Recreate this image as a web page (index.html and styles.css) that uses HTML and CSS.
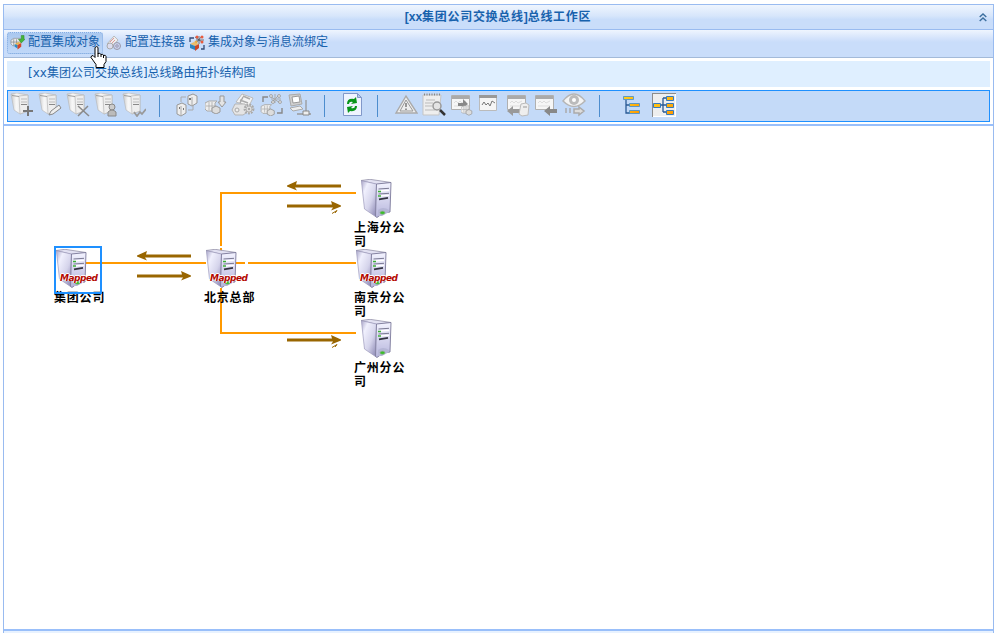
FILE: index.html
```html
<!DOCTYPE html>
<html lang="zh-CN">
<head>
<meta charset="utf-8">
<title>总线工作区</title>
<link rel="stylesheet" href="styles.css">
</head>
<body>
<svg class="defs" width="0" height="0">
  <defs>
    <linearGradient id="side" x1="0" y1="0" x2="1" y2="1"><stop offset="0" stop-color="#aaa6c9"/><stop offset=".25" stop-color="#f0f0fd"/><stop offset=".6" stop-color="#d5d4eb"/><stop offset="1" stop-color="#8581af"/></linearGradient>
    <linearGradient id="face" x1="0" y1="0" x2="0" y2="1"><stop offset="0" stop-color="#f3f3ff"/><stop offset="1" stop-color="#b6b5dc"/></linearGradient>
    <linearGradient id="gside" x1="0" y1="0" x2="1" y2="0"><stop offset="0" stop-color="#c8c8c8"/><stop offset=".3" stop-color="#f8f8f8"/><stop offset="1" stop-color="#d8d8d8"/></linearGradient>
    <linearGradient id="gold" x1="0" y1="0" x2="1" y2="1"><stop offset="0" stop-color="#ffd21c"/><stop offset="1" stop-color="#ff9800"/></linearGradient>
    <symbol id="server" viewBox="0 0 32 40">
      <path d="M0 1.500L9 .3 30 3.500 16 5.500z" fill="#e2e1f2" stroke="#89879f" stroke-width=".7"/>
      <path d="M.4 1.700L15.500 5l-1 32.500L3.500 30z" fill="url(#side)" stroke="#9c99bb" stroke-width=".7"/>
      <path d="M15.500 5L30 3.500 29 33l-7 1-6 4.500-1.500-1z" fill="url(#face)" stroke="#7d7b9b" stroke-width=".9"/>
      <path d="M17 31q5-4 11 0v2l-7 4h-4z" fill="#b5b6d6"/>
      <path d="M17.500 10l10.500-.7M17.500 15l10.500-.7" stroke="#7b7a94" stroke-width="1" fill="none"/>
      <path d="M17.500 12l10.500-.7M17.500 17l10.500-.7" stroke="#fff" stroke-width="1.300"/>
      <path d="M18 20.400l9-1.500" stroke="#333443" stroke-width="1.700"/>
      <path d="M17 12.500h3M17 17h3" stroke="#3cad37" stroke-width="1.500"/>
      <ellipse cx="21.500" cy="33.700" rx="2.400" ry="1.500" fill="#37bf26" stroke="#83a883" stroke-width=".6"/>
    </symbol>
    <symbol id="gserver" viewBox="0 0 24 24">
      <path d="M1 1l6-1 11 2v16l-8 3-6-4z" fill="url(#gside)" stroke="#b5b5b5" stroke-width=".6"/>
      <path d="M9 3l9-1v16l-8 3z" fill="#eee" stroke="#b9b9b9" stroke-width=".7"/>
      <path d="M2 2.500l7 1" stroke="#9d9d9d"/>
      <path d="M11 6h6M11 9h6" stroke="#bcbcbc"/><path d="M11 11.500h6" stroke="#888"/>
    </symbol>
    <symbol id="cubes" viewBox="0 0 18 16">
      <path d="M0 5l4-2h8l-2 2v8H2l-2-2z" fill="#eee" stroke="#aaa"/><path d="M1 8h10M4 4v8M7 4v8" stroke="#aaa" stroke-width=".8"/>
      <path d="M7 10l4-2 4 2v4l-4 2-4-2z" fill="#ddd" stroke="#999"/>
    </symbol>
    <symbol id="gear" viewBox="0 0 12 12">
      <circle cx="6" cy="6" r="4.200" fill="#eee" stroke="#aaa" stroke-width="2.400" stroke-dasharray="1.800 1"/><circle cx="6" cy="6" r="3" fill="#ddd" stroke="#aaa" stroke-width=".8"/><circle cx="6" cy="6" r="1" fill="#999"/>
    </symbol>
    <symbol id="windowpane" viewBox="0 0 20 18">
      <path d="M.5.5h18v14H.5z" fill="#f6f6f6" stroke="#b0b0b0"/><path d="M1 1h17v3H1z" fill="#aaa"/><path d="M3 8l2-2 2 2 2-2 2 2 4-2M3 11h12" fill="none" stroke="#ddd"/>
    </symbol>
    <symbol id="arrow" viewBox="0 0 54 10">
      <path d="M0 3.500h45L44 0l10 4.500v1L44 9.500 46 6.500H0z" fill="#960"/>
    </symbol>
  </defs>
</svg>

<main class="panel">
  <header class="panel-title">
    <h1>[xx<span>集团公司交换总线</span>]<span>总线工作区</span></h1>
    <svg class="collapse" width="8" height="9" viewBox="0 0 8 9"><path d="M.7 4L4 1l3.300 3M.7 8L4 5l3.300 3" fill="none" stroke="#3c6f9f" stroke-width="1.400"/></svg>
  </header>

  <nav class="menu">
    <button class="menu-item active">
      <svg width="16" height="16" viewBox="0 0 16 16"><path d="M1 5l3-2h7v8H3L1 9z" fill="#e7eaee" stroke="#8d939b" stroke-width=".8"/><path d="M1 7h9M4 4v7M7 4v7" stroke="#888" stroke-width=".8"/><path d="M9 4h3V0h3v4h1l-4 4z" fill="#45b738" stroke="#278021" stroke-width=".5"/><path d="M5 9l3 1v4l-3-2z" fill="#298ecb"/><path d="M8 10l4-2v4l-4 3z" fill="#d3482b"/><path d="M5 9l4-2 3 1-4 2z" fill="#e7b24f"/></svg>
      <span>配置集成对象</span>
    </button>
    <button class="menu-item">
      <svg width="16" height="16" viewBox="0 0 16 16"><path d="M1 9L8 1l4 4-6 7z" fill="#eee" stroke="#bbb"/><path d="M4 7l4-4M5 9l4-4" stroke="#d99"/><circle cx="4" cy="11" r="3" fill="#dde" stroke="#aaa"/><circle cx="11" cy="11" r="3.500" fill="#ccd3ed" stroke="#99a"/><circle cx="11" cy="11" r="1.200" fill="#fff" stroke="#88a"/></svg>
      <span>配置连接器</span>
    </button>
    <button class="menu-item">
      <svg width="16" height="16" viewBox="0 0 16 16"><path d="M1 7V3h4M12 14h3v-4" fill="none" stroke="#334b77" stroke-width="1.300"/><path d="M6 2l7 5M13 1L7 8M7 5h8M10 1v8" stroke="#555" stroke-width=".8"/><g fill="#e95a3c"><circle cx="8" cy="2" r="1.500"/><circle cx="13" cy="2" r="1.500"/><circle cx="13" cy="7" r="1.500"/></g><circle cx="7" cy="7" r="1.500" fill="#e8ac47"/><path d="M1 9l4-2 5 2-4 2z" fill="#ecbc69"/><path d="M1 9l5 2v4l-5-2z" fill="#2e84be"/><path d="M6 11l4-2v4l-4 3z" fill="#c94729"/></svg>
      <span>集成对象与消息流绑定</span>
    </button>
  </nav>

  <section class="workspace-head">
    <h2>[xx集团公司交换总线]总线路由拓扑结构图</h2>
    <div class="tools">
      <div class="group">
        <svg class="tool" viewBox="0 0 24 24"><use href="#gserver" width="24" height="24"/><path d="M18 13v10M13 18h10" stroke="#777" stroke-width="2"/></svg>
        <svg class="tool" viewBox="0 0 24 24"><use href="#gserver" width="24" height="24"/><path d="M11 22l2-4 8-6 2 3-8 6z" fill="#eee" stroke="#888"/></svg>
        <svg class="tool" viewBox="0 0 24 24"><use href="#gserver" width="24" height="24"/><path d="M12 13l11 10M22 13L12 23" stroke="#8a8a8a" stroke-width="1.500"/></svg>
        <svg class="tool" viewBox="0 0 24 24"><use href="#gserver" width="24" height="24"/><circle cx="18" cy="14" r="3" fill="#ccc" stroke="#888"/><path d="M14 23v-4q4-4 8 0v4z" fill="#bbb" stroke="#888"/></svg>
        <svg class="tool" viewBox="0 0 24 24"><use href="#gserver" width="24" height="24"/><path d="M12 19l3 4 3-4 2 2 4-5" fill="none" stroke="#999" stroke-width="1.800"/></svg>
      </div>
      <i class="divider"></i>
      <div class="group">
        <svg class="tool" viewBox="0 0 24 24"><path d="M6 9V4h5M13 17h5v-5" fill="none" stroke="#aaa"/><path d="M13 3l5-2 4 2v7l-5 3-4-2z" fill="#eee" stroke="#999"/><path d="M17 4v8" stroke="#aaa"/><path d="M2 12l5-2 4 2v8l-5 3-4-2z" fill="#eee" stroke="#999"/><path d="M6 13v9" stroke="#aaa"/><path d="M14 6h2M4 15h1M8 16h1" stroke="#777" stroke-width="2"/></svg>
        <svg class="tool" viewBox="0 0 24 24"><use href="#cubes" x="2" y="5" width="18" height="16"/><path d="M17 3h4v6h2l-4 5-4-5h2z" fill="#e4e4e4" stroke="#999"/></svg>
        <svg class="tool tall" viewBox="0 0 24 24"><path d="M5 9l6-8 11 4-4 8z" fill="#f4f4f4" stroke="#bbb"/><path d="M9 7l8 3M12 3l7 3M12 4l-3 6" stroke="#aaa" stroke-width="1.500"/><path d="M1 17l3-6h10l4 7-6 4H4z" fill="#e4e4e4" stroke="#b5b5b5"/><circle cx="6" cy="17" r="2" fill="#eee" stroke="#aaa"/><use href="#gear" x="12" y="10" width="12" height="12"/></svg>
        <svg class="tool" viewBox="0 0 24 24"><path d="M4 9V4h5M18 20h5v-5" fill="none" stroke="#888" stroke-width="1.400"/><use href="#cubes" x="1" y="9" width="18" height="14"/><path d="M11 3l10 7M20 2l-8 8M12 6h10M16 1v9" stroke="#aaa"/><g fill="#ddd" stroke="#888" stroke-width=".6"><circle cx="12" cy="3" r="1.500"/><circle cx="20" cy="3" r="1.500"/><circle cx="14" cy="9" r="1.500"/><circle cx="21" cy="9" r="1.500"/></g></svg>
        <svg class="tool" viewBox="0 0 24 24"><path d="M2 2l11-1 2 10-11 2z" fill="#d0d0d0" stroke="#aaa"/><path d="M5 4l7-1 1 6-7 1z" fill="#fff" stroke="#999"/><path d="M3 15l10-2 3 3-10 2z" fill="#eee" stroke="#aaa"/><path d="M19 7v11M10 21h14" fill="none" stroke="#999" stroke-width="1.300"/><path d="M16 18h6v4h-6z" fill="#eee" stroke="#888"/></svg>
      </div>
      <i class="divider"></i>
      <div class="group">
        <svg class="tool" viewBox="0 0 24 24"><path d="M3.500.5h14l4 4v18h-18z" fill="#eff4ff" stroke="#8198c9"/><path d="M17.500.5v4h4z" fill="#b8c9ed" stroke="#8198c9"/><path d="M7 11q0-6 7-5l2-2 1 6-6 1 2-2q-4-1-4 2zM17 13q0 6-7 5l-2 2-1-6 6-1-2 2q4 1 4-2z" fill="#079519"/></svg>
      </div>
      <i class="divider"></i>
      <div class="group monitor">
        <svg class="tool" viewBox="0 0 24 24"><path d="M12 3L2 20h21z" fill="#eee" stroke="#aaa" stroke-width="1.400"/><path d="M12 7l-6 11h13z" fill="#eee" stroke="#999"/><path d="M12 10v4M12 15.500v1.500" stroke="#888" stroke-width="1.700"/></svg>
        <svg class="tool" viewBox="0 0 24 24"><path d="M1 2h18l-2 20H1z" fill="#eee" stroke="#c5c5c5"/><path d="M2 1.500h17" stroke="#888" stroke-width="2" stroke-dasharray="1 1.500"/><path d="M4 7h9M3 10h8M3 13h7M3 17h10" stroke="#bbb"/><circle cx="15" cy="13" r="4" fill="#e4e4e4" stroke="#999" stroke-width="1.500"/><path d="M18 17l5 5" stroke="#333" stroke-width="2.500"/></svg>
        <svg class="tool" viewBox="0 0 24 24"><use href="#windowpane" x="1" y="2" width="20" height="18"/><path d="M8 10h5V6l5 5-5 4v-2H8z" fill="#888"/><use href="#cubes" x="11" y="10" width="13" height="13"/></svg>
        <svg class="tool" viewBox="0 0 24 24"><path d="M1.500 2.500h17v15h-17z" fill="#f5f5f5" stroke="#bbb"/><path d="M1 2h18v3H1z" fill="#999"/><path d="M4 12l2-3 2 3 2-2 2 3 2-5 3 2" fill="none" stroke="#777"/></svg>
        <svg class="tool" viewBox="0 0 24 24"><use href="#windowpane" x="1" y="2" width="20" height="18"/><path d="M1 18l6-5v3h9v4H7v3z" fill="#999"/><path d="M15 11l5-1 3 2-1 10-6 1-3-2z" fill="#eee" stroke="#bbb"/><path d="M17 14h4" stroke="#999"/></svg>
        <svg class="tool" viewBox="0 0 24 24"><use href="#windowpane" x="1" y="2" width="20" height="18"/><path d="M10 18l6-5v3h7v4h-7v3z" fill="#888"/></svg>
        <svg class="tool" viewBox="0 0 24 24"><path d="M1 8q11-14 22 0-11 11-22 0z" fill="#f4f4f4" stroke="#b5b5b5" stroke-width="1.500"/><circle cx="12" cy="7" r="5" fill="#bbb"/><circle cx="12" cy="7" r="2" fill="#fff"/><path d="M4 15v5M8 15v5M12 16h5v-2l5 4-5 4v-2h-5z" fill="#ddd" stroke="#aaa" stroke-width="1.500"/></svg>
      </div>
      <i class="divider"></i>
      <div class="group views">
        <svg class="tool" viewBox="0 0 24 24"><path d="M6 7v13h4M6 12h4" fill="none" stroke="#295994" stroke-width="1.300"/><g fill="url(#gold)" stroke="#3b8bd4" stroke-width=".8"><path d="M3.500 3.500h10v3h-10zM9.500 10.500h10v3h-10zM9.500 17.500h10v3h-10z"/></g></svg>
        <svg class="tool selected" viewBox="0 0 24 24"><path d="M7 12h8M11 5v14M11 5h4M11 19h4" fill="none" stroke="#295994" stroke-width="1.300"/><g fill="url(#gold)" stroke="#357abe"><path d="M1.500 10.500h7v4h-7zM14.500 3.500h7v4h-7zM14.500 10.500h7v4h-7zM14.500 17.500h7v4h-7z"/></g></svg>
      </div>
    </div>
  </section>

  <section class="diagram">
    <svg class="routes" width="420" height="270" viewBox="0 126 420 270">
      <path d="M86 263h120M236 263h9M248 263h108M356 193H221v53M221 248v4M221 288v45h135" fill="none" stroke="#f90" stroke-width="2"/>
      <use href="#arrow" x="137" y="271" width="54" height="10"/>
      <use href="#arrow" x="287" y="201" width="54" height="10"/>
      <use href="#arrow" x="287" y="335" width="54" height="10"/>
      <use href="#arrow" width="54" height="10" transform="translate(191 251) scale(-1 1)"/>
      <use href="#arrow" width="54" height="10" transform="translate(341 181) scale(-1 1)"/>
      <path d="M332 213.500l5-3-2 2.500M332 347.500l5-3-2 2.500" fill="none" stroke="#960"/>
    </svg>
    <div class="node group-hq"><svg class="server"><use href="#server"/></svg><b class="mapped">Mapped</b><span>集团公司</span></div>
    <div class="node beijing"><svg class="server"><use href="#server"/></svg><b class="mapped">Mapped</b><span>北京总部</span></div>
    <div class="node plain shanghai"><svg class="server"><use href="#server"/></svg><span>上海分公司</span></div>
    <div class="node nanjing"><svg class="server"><use href="#server"/></svg><b class="mapped">Mapped</b><span>南京分公司</span></div>
    <div class="node plain guangzhou"><svg class="server"><use href="#server"/></svg><span>广州分公司</span></div>
  </section>
  <footer class="statusbar"></footer>
</main>
<svg class="pointer" width="17" height="22" viewBox="0 0 17 22"><path d="M5 1.500q2-2 3 0v6q2-1 3 1 2-1 2.500 1 2-1 2.500 1v5l-2 3v3H6v-3l-5-7q0-2 2-2l2 2z" fill="#fff" stroke="#000"/><path d="M8 7v4M11 8v3M13.500 9v3" stroke="#000"/></svg>
</body>
</html>
```
FILE: styles.css
```css
* { box-sizing: border-box; }
body {
  margin: 0;
  height: 633px;
  overflow: hidden;
  padding: 4px 1px 0 3px;
  background: #fff;
  color: #1862ad;
  font: 12px/14px "DejaVu Sans", "Noto Sans CJK SC", sans-serif;
}
h1, h2 { margin: 0; font-size: 12px; }
.defs, .pointer { position: absolute; }
.panel {
  display: flex;
  flex-direction: column;
  height: 629px;
  border: 1px solid #99bbf0;
  border-bottom: 0;
}
.panel-title {
  display: flex;
  align-items: center;
  height: 25px;
  padding-right: 6px;
  border-bottom: 1px solid #99bbf0;
  background: linear-gradient(#eff5fe, #d7e6fb 45%, #c9ddfa 60%, #c9ddfa);
}
.panel-title h1 {
  flex: 1;
  padding-left: 13px;
  text-align: center;
  font-family: "Liberation Sans", "Noto Sans CJK SC", sans-serif;
  white-space: nowrap;
}
.panel-title h1 span { letter-spacing: .7px; }
.menu {
  display: flex;
  align-items: center;
  height: 28px;
  padding: 0 0 2px 3px;
  border-bottom: 1px solid #a3bad9;
  background: linear-gradient(#eff5fe, #d1e1fb 35%, #c9ddfa 45%, #c9ddfa);
}
.menu-item {
  display: flex;
  align-items: center;
  gap: 3px;
  height: 22px;
  padding: 0 2px;
  border: 0;
  background: none;
  color: inherit;
  font: inherit;
  white-space: nowrap;
}
.menu-item span { padding-bottom: 1px; }
.menu-item.active {
  width: 96px;
  margin-right: 1px;
  border: 1px dotted #83ace1;
  border-radius: 3px;
  background: linear-gradient(#aac8ef, #c0d8f8);
}
.workspace-head {
  height: 68px;
  padding: 3px;
  border-bottom: 2px solid #99bffa;
}
.workspace-head h2 {
  height: 26px;
  padding-left: 21px;
  background: #dfefff;
  font-weight: 400;
  line-height: 24px;
}
.tools {
  display: flex;
  height: 32px;
  margin-top: 3px;
  padding: 2px 0 0 2px;
  border: 1px solid #1e90ff;
  background: #c4daf8;
}
.group { display: flex; gap: 4px; }
.tool { width: 24px; height: 24px; }
.divider {
  width: 1px;
  height: 22px;
  margin: 2px 15px 0 13px;
  background: #4d8dce;
}
.group + .divider + .monitor { margin-left: 1px; }
.views { gap: 8px; margin-left: 5px; }
.selected {
  background: #eee;
  box-shadow: inset 1px 1px #8c8c8c, inset -1px -1px #fff;
}
.diagram { position: relative; height: 503px; background: #fff; }
.routes { position: absolute; left: -4px; top: 0; }
.node {
  position: absolute;
  display: flex;
  flex-direction: column;
  width: 56px;
  color: #000;
  font: bold 12px/14px "Noto Sans CJK SC", sans-serif;
}
.node span {
  margin-top: 1px;
  letter-spacing: .8px;
}
.server { width: 32px; height: 40px; margin-left: 2px; }
.plain .server { margin-left: 7px; }
.mapped {
  position: absolute;
  left: 6px;
  top: 23px;
  color: #b40900;
  font: italic bold 9px/12px "DejaVu Sans", sans-serif;
  letter-spacing: -.5px;
  text-shadow: -1px 0 #fff, 1px 0 #fff, 0 -1px #fff;
}
.group-hq { left: 50px; top: 123px; }
.group-hq::before {
  content: "";
  position: absolute;
  left: 0;
  top: -3px;
  width: 44px;
  height: 44px;
  border: 2px solid #1e90ff;
}
.beijing { left: 200px; top: 123px; }
.shanghai { left: 350px; top: 53px; }
.nanjing { left: 350px; top: 123px; }
.guangzhou { left: 350px; top: 193px; }
.statusbar { flex: 1; border-top: 2px solid #99bffa; background: #e8f2ff; }
.pointer { left: 90px; top: 46px; }
```
